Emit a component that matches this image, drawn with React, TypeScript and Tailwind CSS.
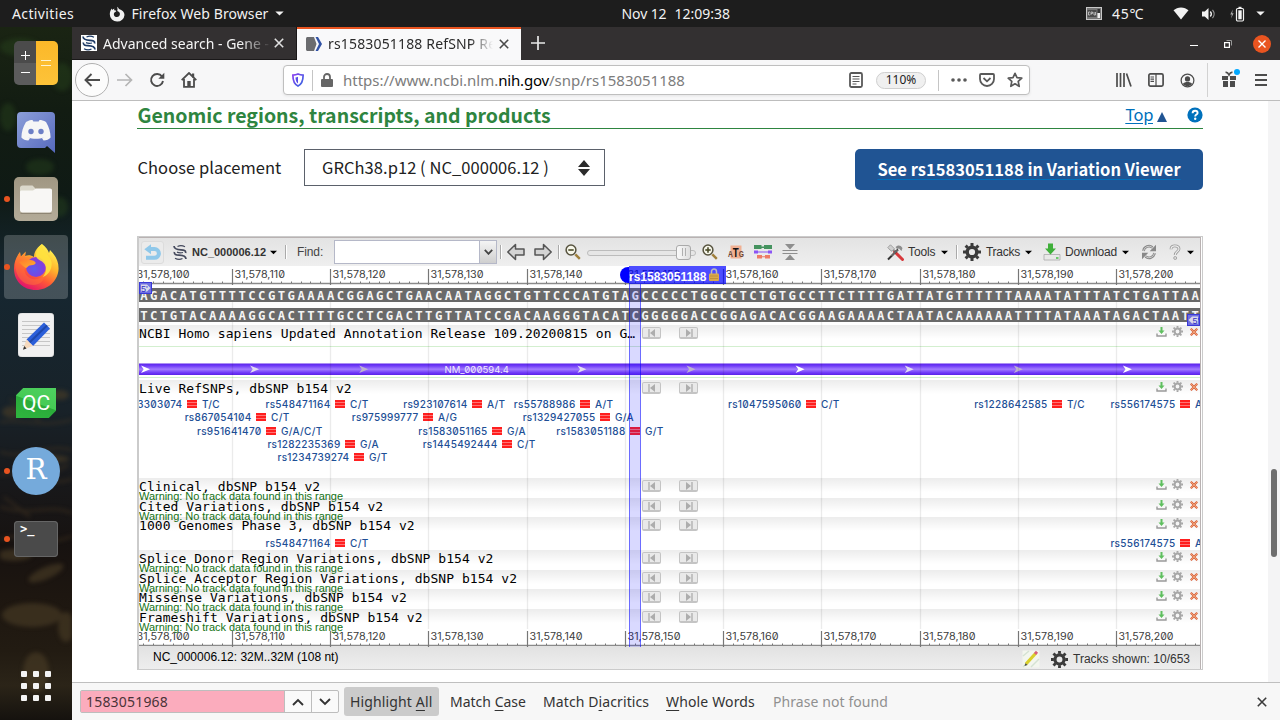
import type { ReactNode } from 'react';

const BASE = 1061 / 108;
const TOP_STRAND =
  'AGACATGTTTTCCGTGAAAACGGAGCTGAACAATAGGCTGTTCCCATGTAGCCCCCTGGCCTCTGTGCCTTCTTTTGATTATGTTTTTTAAAATATTTATCTGATTAA';
const PAIR: Record<string, string> = { A: 'T', T: 'A', G: 'C', C: 'G' };
const BOTTOM_STRAND = TOP_STRAND.split('').map((b) => PAIR[b]).join('');
const TICKS = Array.from({ length: 11 }, (_, i) => i);
const tickX = (n: number) => Math.floor((n * 10 - 0.5) * BASE);

type Snp = { id: string; base: number; alleles: string; y: number };

const LIVE_SNPS: Snp[] = [
  { id: 'rs913303074', base: 5, alleles: 'T/C', y: 24.5 },
  { id: 'rs548471164', base: 20, alleles: 'C/T', y: 24.5 },
  { id: 'rs923107614', base: 34, alleles: 'A/T', y: 24.5 },
  { id: 'rs55788986', base: 45, alleles: 'A/T', y: 24.5 },
  { id: 'rs1047595060', base: 68, alleles: 'C/T', y: 24.5 },
  { id: 'rs1228642585', base: 93, alleles: 'T/C', y: 24.5 },
  { id: 'rs556174575', base: 106, alleles: 'A/G', y: 24.5 },
  { id: 'rs867054104', base: 12, alleles: 'C/T', y: 37.5 },
  { id: 'rs975999777', base: 29, alleles: 'A/G', y: 37.5 },
  { id: 'rs1329427055', base: 47, alleles: 'G/A', y: 37.5 },
  { id: 'rs951641470', base: 13, alleles: 'G/A/C/T', y: 51.5 },
  { id: 'rs1583051165', base: 36, alleles: 'G/A', y: 51.5 },
  { id: 'rs1583051188', base: 50, alleles: 'G/T', y: 51.5 },
  { id: 'rs1282235369', base: 21, alleles: 'G/A', y: 64.5 },
  { id: 'rs1445492444', base: 37, alleles: 'C/T', y: 64.5 },
  { id: 'rs1234739274', base: 22, alleles: 'G/T', y: 77.5 },
];

const GENOMES_SNPS: Snp[] = [
  { id: 'rs548471164', base: 20, alleles: 'C/T', y: 26 },
  { id: 'rs556174575', base: 106, alleles: 'A/G', y: 26 },
];

/* ---------- desktop: top bar ---------- */

function Caret({ className = 'w-[9px]' }: { className?: string }) {
  return (
    <svg viewBox="0 0 10 6" className={`h-[5px] shrink-0 ${className}`}>
      <path d="M0 .5h10L5 5.5z" fill="currentColor" />
    </svg>
  );
}

function TopBar() {
  return (
    <header className="flex h-[27px] shrink-0 items-center bg-[#1d1d1d] text-[14px] leading-[27px] text-[#f2f2f2]">
      <span className="ml-3 w-[97px] tracking-[0.37px]">Activities</span>
      <svg viewBox="0 0 16 16" className="h-4 w-4">
        <path d="M8 .8c1 .6 1.700 1.300 2 2.200C13.300 3.900 15.500 6 15.500 9A7.200 7.200 0 0 1 8.200 15.600 7.300 7.300 0 0 1 .8 8.300C.8 6 1.500 4 2.800 2.400l.4 1.500c.7-.6 1.500-1 2.300-1.100l-.6 1.500c.9-.4 2 0 2.400 1L5.200 6.700c-.6 1.200-.4 2.800.7 3.700 1.300 1 3.200.9 4.300-.3 1-1.200 1-2.900-.1-4L8.300 5C8.700 3.500 8.500 2 8 .8z" fill="#f0f0f0" />
      </svg>
      <span className="ml-[6.500px] w-[143px] tracking-[0.084px]">Firefox Web Browser</span>
      <Caret />
      <span className="ml-[338px] tracking-[-0.1px]">Nov 12</span>
      <span className="ml-2">12:09:38</span>
      <div className="ml-auto flex items-center pr-[15px]">
        <svg viewBox="0 0 16 13" className="mr-[10px] h-[13px] w-4">
          <rect x=".5" y=".5" width="15" height="12" fill="#777" stroke="#c9c9c9" />
          <rect x="1.500" y="3" width="9" height="7" fill="#4a4a4a" />
          <path d="M4 5H2.500v3H4M5 8V5h1.500v1.500H5M8 5v3h1.500V5" stroke="#ccc" strokeWidth=".8" fill="none" />
          <rect x="11.500" y="2" width="2.500" height="4" fill="#333" />
          <rect x="11.500" y="6" width="2.500" height="5" fill="#eee" />
        </svg>
        <span className="mr-[29px] tracking-[0.68px]">45℃</span>
        <svg viewBox="0 0 16 13" className="mr-[12px] h-[13px] w-4">
          <path d="M8 12.500.5 3.300C2.500 1.400 5.100.4 8 .4s5.500 1 7.500 2.900z" fill="#f2f2f2" />
        </svg>
        <svg viewBox="0 0 16 14" className="mr-[12px] h-[14px] w-4">
          <path d="M1 4.500h2.800L7.500 1v12L3.800 9.500H1z" fill="#f2f2f2" />
          <path d="M9.300 4.500c1.200 1.400 1.200 3.600 0 5" stroke="#f2f2f2" strokeWidth="1.300" fill="none" />
          <path d="M11.500 2.800c2.100 2.400 2.100 6 0 8.400" stroke="#999" strokeWidth="1.200" fill="none" />
        </svg>
        <svg viewBox="0 0 16 16" className="mr-[11px] h-4 w-4">
          <path d="M3.800 3.500 1.300 8.600h1.600L2 12.500 4.600 7.300H3.100z" fill="#aaa" />
          <rect x="7.500" y="2.500" width="7" height="12.500" rx="1.200" fill="none" stroke="#f2f2f2" strokeWidth="1.200" />
          <rect x="9.300" y="4.300" width="3.400" height="9" fill="#f2f2f2" />
          <rect x="9.500" y=".8" width="3" height="1.500" fill="#f2f2f2" />
        </svg>
        <Caret />
      </div>
    </header>
  );
}

/* ---------- desktop: dock ---------- */

function DockSlot({ running, active, children }: { running?: boolean; active?: boolean; children: ReactNode }) {
  return (
    <div className="relative flex h-[68px] w-[72px] shrink-0 items-center justify-center">
      {active && <div className="absolute inset-x-1 inset-y-0.5 rounded bg-white/20" />}
      {running && <div className="absolute left-1 top-[31px] h-[6px] w-[6px] rounded-full bg-[#e95420]" />}
      <div className="relative flex h-12 w-12 items-center justify-center">{children}</div>
    </div>
  );
}

function Dock() {
  return (
    <nav className="relative flex w-[72px] shrink-0 flex-col overflow-hidden bg-[linear-gradient(180deg,#1a2413_0%,#121c12_12%,#0f1a15_24%,#162731_36%,#182229_55%,#18181a_66%,#171210_75%,#1d1610_82%,#221b12_90%,#2b2418_95%,#15120e_100%)] pt-[2px]">
      <svg viewBox="0 0 72 693" className="absolute inset-0 h-full w-full blur-[2px]">
        <g stroke="#4a3823" fill="none" strokeWidth="2" opacity=".6">
          <path d="M0 395c25-3 45 6 72-2M0 425c20 8 50-9 72-2M0 448c28-8 47 14 72 4M0 480c30 10 50-4 72 6M0 512c24-8 44 10 72-3M10 372l30 22M40 452l28-14M4 470l26 20" />
        </g>
        <g fill="#4c3e27" opacity=".6">
          <ellipse cx="12" cy="385" rx="10" ry="6" />
          <ellipse cx="60" cy="368" rx="9" ry="5" />
          <ellipse cx="52" cy="432" rx="17" ry="4" />
          <ellipse cx="14" cy="528" rx="18" ry="6" />
          <ellipse cx="46" cy="546" rx="19" ry="6" transform="rotate(-24 46 546)" />
          <ellipse cx="32" cy="588" rx="30" ry="12" />
          <ellipse cx="36" cy="645" rx="13" ry="20" />
          <ellipse cx="66" cy="600" rx="8" ry="15" />
        </g>
        <g fill="#2b4a1e" opacity=".4">
          <ellipse cx="20" cy="20" rx="20" ry="9" />
          <ellipse cx="62" cy="50" rx="10" ry="14" />
          <ellipse cx="8" cy="90" rx="8" ry="14" />
          <ellipse cx="40" cy="140" rx="14" ry="8" />
          <ellipse cx="60" cy="180" rx="8" ry="10" />
        </g>
      </svg>
      <DockSlot>
        <svg viewBox="0 0 44 44" className="h-11 w-11">
          <defs>
            <clipPath id="calc"><rect width="44" height="44" rx="5" /></clipPath>
            <linearGradient id="calcY" x1="0" y1="0" x2="0" y2="1"><stop stopColor="#fbb829" /><stop offset="1" stopColor="#fdc339" /></linearGradient>
          </defs>
          <g clipPath="url(#calc)">
            <rect width="22" height="22" fill="#4b4b4b" />
            <rect y="22" width="22" height="22" fill="#5c5c5c" />
            <rect x="22" width="22" height="44" fill="url(#calcY)" />
          </g>
          <path d="M7 14.500h9M11.500 10v9M7 31.500h9" stroke="#fff" strokeWidth="1" />
          <path d="M27 19.500h10M27 24.500h10" stroke="#fff3d0" strokeWidth="1" />
        </svg>
      </DockSlot>
      <DockSlot>
        <svg viewBox="0 0 38 41" className="mt-0.5 h-[41px] w-[38px]">
          <defs><linearGradient id="disc" x1="0" y1="0" x2="1" y2="1"><stop stopColor="#8c9fd9" /><stop offset="1" stopColor="#5669bd" /></linearGradient></defs>
          <path d="M4 0h30a4 4 0 0 1 4 4v37l-8-7-2 2H4a4 4 0 0 1-4-4V4a4 4 0 0 1 4-4z" fill="url(#disc)" />
          <path d="M9 10c3-1.800 5-2 6.500-2l.8 1.500h5.400L22.500 8c2 0 4 .4 6.500 2 3 5 4.500 10 4.600 15.500-1.600 1.800-4 2.900-7 3.100l-1.600-2.300 2-1.100c-4.800 2.100-11.200 2.100-16 0l2 1.100-1.600 2.300c-3-.2-5.400-1.300-7-3.100C4.500 20 6 15 9 10z" fill="#f6f6f6" />
          <circle cx="14" cy="19.500" r="2.700" fill="#6c7fc6" />
          <circle cx="24" cy="19.500" r="2.700" fill="#6c7fc6" />
        </svg>
      </DockSlot>
      <DockSlot running>
        <svg viewBox="0 0 44 44" className="h-11 w-11">
          <defs><linearGradient id="fold" x1="0" y1="0" x2="0" y2="1"><stop stopColor="#a09783" /><stop offset="1" stopColor="#b3ab98" /></linearGradient></defs>
          <rect width="44" height="44" rx="5" fill="url(#fold)" />
          <path d="M6 11c0-1.500 1-2.500 2.500-2.500h10L22 12h14c1.200 0 2 .8 2 2v4H6z" fill="#dbd8cb" />
          <path d="M6 15c0-1 .7-1.500 1.500-1.500H19l3-2h14c1.200 0 2 .8 2 2V33c0 1.500-1 2.500-2.500 2.500h-27C7 35.500 6 34.500 6 33z" fill="#f8f7f5" />
          <path d="M6.500 36.500h31" stroke="#8e8573" strokeWidth="1" />
        </svg>
      </DockSlot>
      <DockSlot running active>
        <svg viewBox="0 0 48 48" className="h-12 w-12">
          <defs>
            <linearGradient id="fx" x1=".8" y1=".1" x2=".3" y2="1"><stop stopColor="#fff04f" /><stop offset=".35" stopColor="#ffb32c" /><stop offset=".65" stopColor="#ff5a35" /><stop offset="1" stopColor="#e0106f" /></linearGradient>
            <linearGradient id="fxO" x1="0" y1="0" x2="1" y2="1"><stop stopColor="#ff7a2d" /><stop offset="1" stopColor="#ffb12e" /></linearGradient>
            <radialGradient id="fxP" cx=".4" cy=".6" r=".8"><stop stopColor="#5a5cf0" /><stop offset=".6" stopColor="#8040dc" /><stop offset="1" stopColor="#b13bc9" /></radialGradient>
          </defs>
          <path d="M30 1c4 3 6 6 7 9l1-3c6 6 9 12 8.500 20C45.500 38 36 47 24 47 11 47 2 38 2 25.500c0-5.500 1.500-10 4.500-14.500l1.500-2 .8 4.500 5-5L13 13c3-1 6-1 9 1 0-6 4-10 8-13z" fill="url(#fx)" />
          <path d="M3 21c1-5 3-9 5-12l1 5 5-5-1 5c4-1.500 7-.5 9 1.500l1 3.500c-1 1.500-4 2-6 2.500.5 2-1.500 3-3 3.500-3 1-1 8 5 10.500 6 2.200 12-1 14-5 0 6-4 11.500-12 11.500C10 42 3.500 33 3 21z" fill="#ff7438" opacity=".5" />
          <circle cx="24" cy="24" r="10" fill="url(#fxP)" />
          <path d="M7 19c3-2 10-3 14-1.500 2 .8 3 2 2.500 3-1 1.500-4 1.500-6 2-1.500.4-2 2-3.500 2.500C12 24 9 21 7 19z" fill="url(#fxO)" />
          <path d="M30 1c-4 3-6 7-6 11 0 5 6 5 8.500 9 3 5 1 10-2 13 6-2 10-8 9-15-1-7-9-9-9.500-18z" fill="#ffe23e" opacity=".9" />
        </svg>
      </DockSlot>
      <DockSlot>
        <svg viewBox="0 0 36 44" className="h-11 w-9">
          <rect width="36" height="44" rx="4" fill="#f1f1f1" stroke="#cfcfcf" strokeWidth=".6" />
          <path d="M4 8.500h28M4 12.500h28M4 16.500h28M4 20.500h28M4 24.500h28M4 28.500h28M4 32.500h28" stroke="#c6c6c6" strokeWidth="1" />
          <path d="M26 9.500 32 15.500 15 33 8.500 26.500z" fill="#2b5fd9" />
          <path d="m29 12.500-17.500 17" stroke="#1e48ac" strokeWidth="2" />
          <path d="M8.500 26.500 5 36.500 15 33z" fill="#f5d9bd" />
          <path d="M6.200 33 5 36.700l3.500-1.300z" fill="#333" />
        </svg>
      </DockSlot>
      <DockSlot>
        <div className="flex h-[30px] w-10 items-center justify-center bg-[linear-gradient(200deg,#4fd05f_0%,#45cb55_49%,#2aab3a_51%,#2fb63f_100%)] font-['Roboto','Liberation_Sans',sans-serif] text-[21px] leading-none text-white [clip-path:polygon(18%_0,100%_0,100%_76%,82%_100%,0_100%,0_24%)]">
          QC
        </div>
      </DockSlot>
      <DockSlot running>
        <div className="flex h-12 w-12 shrink-0 items-center justify-center rounded-full bg-[#75aadb] font-['DejaVu_Serif',serif] text-[28px] leading-none text-white">
          <span className="-mt-0.5">R</span>
        </div>
      </DockSlot>
      <DockSlot running>
        <div className="h-9 w-11 rounded bg-[#4a4a4a] pl-[6px] pt-[1px] font-['DejaVu_Sans_Mono',monospace] text-[12px] font-bold leading-[14px] text-white ring-1 ring-inset ring-[#666]">
          &gt;_
        </div>
      </DockSlot>
      <div className="mt-auto mb-[19px] grid grid-cols-3 gap-[6px] self-center">
        {Array.from({ length: 9 }, (_, i) => (
          <div key={i} className="relative h-[6px] w-[6px] rounded-[1px] bg-[#f4f4f4]" />
        ))}
      </div>
    </nav>
  );
}

/* ---------- browser chrome ---------- */

function CloseX({ className }: { className?: string }) {
  return (
    <svg viewBox="0 0 10 10" className={`h-[10px] w-[10px] shrink-0 ${className ?? ''}`}>
      <path d="m.8.8 8.400 8.400M9.200.8.8 9.200" stroke="currentColor" strokeWidth="1.600" />
    </svg>
  );
}

function Helix({ className, color = '#1d3a66' }: { className?: string; color?: string }) {
  return (
    <svg viewBox="0 0 16 16" className={className}>
      <path d="M2 1.500C2.200 5 6 5.200 9 5.300c3 .1 5 .7 4.600 3.200M14 14.500c-.2-3.500-4-3.700-7-3.800-3-.1-5-.7-4.600-3.200" stroke={color} strokeWidth="1.700" fill="none" />
      <path d="M5.500 2c2.500-1.200 5-1 7.500.3M3 13.700c2.500 1.300 5 1.500 7.500.3M5 7.600c2 .9 4 .9 6 .4" stroke={color} strokeWidth="1.200" fill="none" />
    </svg>
  );
}

function TabStrip() {
  return (
    <div className="flex h-[33px] shrink-0 bg-[#333031] text-[14px] leading-[33px]">
      <div className="flex w-[225px] items-center border-b border-r border-[#1a1819] pl-[9px] text-[#f4f4f4]">
        <div className="h-4 w-4 bg-white"><Helix className="h-4 w-4" /></div>
        <div className="ml-[6px] w-[168px] overflow-hidden whitespace-nowrap [mask-image:linear-gradient(90deg,#000_82%,transparent)]">Advanced search - Gene - NCBI</div>
        <CloseX className="ml-[3px] text-[#e0e0e0]" />
      </div>
      <div className="flex w-[224px] items-center border-t-2 border-[#e95420] bg-[#f9f9fa] pl-[9px] text-[#2b2b2b]">
        <svg viewBox="0 0 16 14" className="-mt-[2px] h-[14px] w-4">
          <path d="M0 1.500C0 .7.700 0 1.500 0H8l2.500 7L8 14H1.500C.7 14 0 13.300 0 12.500z" fill="#6b6c6f" />
          <path d="M9.500 0h2.500L16 7l-4 7H9.500l3.500-7z" fill="#3253a5" />
        </svg>
        <div className="-mt-[2px] ml-[6px] w-[165px] overflow-hidden whitespace-nowrap leading-[31px] tracking-[0.16px] [mask-image:linear-gradient(90deg,#000_86%,transparent)]">rs1583051188 RefSNP Report</div>
        <CloseX className="-mt-[2px] ml-[6px] text-[#4a4a4a]" />
      </div>
      <svg viewBox="0 0 14 14" className="ml-[10px] mt-[9px] h-[14px] w-[14px]">
        <path d="M7 0v14M0 7h14" stroke="#e8e8e8" strokeWidth="1.700" />
      </svg>
      <div className="flex flex-1 items-center justify-end pr-[9px]">
        <div className="mt-[4px] h-px w-2 bg-white" />
        <svg viewBox="0 0 8 8" className="ml-[26px] h-2 w-2 text-white">
          <path d="M.6 2.600h4.800v4.800H.6z" fill="none" stroke="currentColor" strokeWidth="1.200" />
          <path d="M2.500.5h5v5" fill="none" stroke="#999" strokeWidth="1" />
        </svg>
        <div className="ml-[21px] flex h-[18px] w-[18px] items-center justify-center rounded-full bg-[#e95420] text-white">
          <svg viewBox="0 0 8 8" className="h-2 w-2"><path d="m.5.5 7 7M7.500.5l-7 7" stroke="#fff" strokeWidth="1.400" /></svg>
        </div>
      </div>
    </div>
  );
}

function NavBar() {
  return (
    <div className="flex h-[41px] shrink-0 items-center border-b border-[#bdbdbd] bg-[#f7f7f8] text-[#4c4c4c]">
      <div className="ml-[3px] flex h-[34px] w-[34px] items-center justify-center rounded-full border border-[#b0b0b0] bg-[#fcfcfc]">
        <svg viewBox="0 0 16 14" className="h-[14px] w-4"><path d="M7.500 1 1.500 7l6 6M1.500 7H16" stroke="currentColor" strokeWidth="1.900" fill="none" /></svg>
      </div>
      <svg viewBox="0 0 16 14" className="ml-2 h-[14px] w-4 text-[#b5b5b5]"><path d="m8.500 1 6 6-6 6M14.500 7H0" stroke="currentColor" strokeWidth="1.700" fill="none" /></svg>
      <svg viewBox="0 0 16 16" className="ml-4 h-4 w-4"><path d="M13 4.500A6 6 0 1 0 14 9" stroke="currentColor" strokeWidth="1.900" fill="none" /><path d="M15.300.8v6h-6z" fill="currentColor" /></svg>
      <svg viewBox="0 0 16 16" className="ml-4 h-4 w-4">
        <path d="M.7 8.200 8 1l7.300 7.200M3 7v7.800h10V7" stroke="currentColor" strokeWidth="1.800" fill="none" />
        <path d="M6.300 15V9h3.400v6M11 1.500h2.200v4H11z" fill="currentColor" />
      </svg>
      <div className="ml-[86px] flex h-[30px] w-[747px] items-center rounded-[4px] border border-[#bfbfbf] bg-white text-[15px] shadow-[0_1px_3px_rgba(0,0,0,0.08)]">
        <svg viewBox="0 0 12 14" className="ml-2 h-[14px] w-3">
          <defs><linearGradient id="shield" x1="0" y1="0" x2="1" y2="1"><stop stopColor="#8a3ff0" /><stop offset="1" stopColor="#3467e0" /></linearGradient></defs>
          <path d="M6 .9c1.700.8 3.400 1.100 5.100 1.200C11.200 7.500 10.300 11 6 13.100 1.700 11 .8 7.500.9 2.100 2.600 2 4.300 1.700 6 .9z" fill="none" stroke="url(#shield)" strokeWidth="1.700" />
          <path d="M6 3.700v6.800C4.400 9.300 3.600 7.500 3.500 4.500 4.400 4.400 5.200 4.100 6 3.700z" fill="#5a4ee8" />
        </svg>
        <div className="ml-[8px] h-[21px] w-px bg-[#c5c5c5]" />
        <svg viewBox="0 0 12 14" className="ml-[8px] h-[14px] w-3"><path d="M3 7V4a3 3 0 0 1 6 0v3" stroke="#666" strokeWidth="1.800" fill="none" /><rect y="6" width="12" height="8" rx="1" fill="#666" /></svg>
        <div className="ml-[10px] flex whitespace-nowrap leading-[28px] text-[#7c7c7c]">
          <span>https://www.ncbi.nlm.</span>
          <span className="tracking-[-0.2px] text-black">nih.gov</span>
          <span>/snp/rs1583051188</span>
        </div>
        <div className="ml-auto flex items-center pr-[6px] text-[#595959]">
          <svg viewBox="0 0 14 16" className="h-4 w-[14px]"><rect x="1" y="1" width="12" height="14" rx="1.500" fill="none" stroke="currentColor" strokeWidth="1.800" /><path d="M3.500 4.500h7M3.500 7h7M3.500 9.500h7M3.500 12h4" stroke="currentColor" strokeWidth="1" /></svg>
          <div className="ml-[13px] flex h-[17px] w-[50px] items-center justify-center rounded-full border border-[#cfcfcf] bg-[#f0f0f0] text-[12px] text-[#1c1c1c]">110%</div>
          <div className="ml-3 h-[21px] w-px bg-[#c5c5c5]" />
          <svg viewBox="0 0 16 4" className="ml-3 h-1 w-4"><circle cx="2" cy="2" r="1.800" fill="currentColor" /><circle cx="8" cy="2" r="1.800" fill="currentColor" /><circle cx="14" cy="2" r="1.800" fill="currentColor" /></svg>
          <svg viewBox="0 0 16 14" className="ml-3 h-[14px] w-4"><path d="M1 2c0-.6.400-1 1-1h12c.6 0 1 .4 1 1v4a7 7 0 0 1-14 0z" fill="none" stroke="currentColor" strokeWidth="1.800" /><path d="m4.500 5 3.500 3.300L11.500 5" fill="none" stroke="currentColor" strokeWidth="1.800" /></svg>
          <svg viewBox="0 0 16 16" className="ml-3 h-4 w-4"><path d="m8 1.300 2 4.400 4.800.5-3.600 3.200 1 4.900L8 11.800l-4.200 2.500 1-4.900L1.200 6.200 6 5.700z" fill="none" stroke="currentColor" strokeWidth="1.700" strokeLinejoin="round" /></svg>
        </div>
      </div>
      <div className="ml-auto flex items-center pr-[13px] text-[#4c4c4c]">
        <svg viewBox="0 0 16 14" className="h-[14px] w-4"><path d="M1 0v14M4.500 0v14M8 0v14M10.500.5 15 13.500" stroke="currentColor" strokeWidth="1.700" /></svg>
        <svg viewBox="0 0 16 14" className="ml-[16px] h-[14px] w-4"><rect x=".9" y=".9" width="14.200" height="12.200" rx="1.500" fill="none" stroke="currentColor" strokeWidth="1.700" /><path d="M8 1v12M2.500 4H6M2.500 6.200H6M2.500 8.400H6" stroke="currentColor" strokeWidth="1.200" /></svg>
        <svg viewBox="0 0 16 16" className="ml-[16px] h-[15px] w-[15px]"><circle cx="8" cy="8" r="6.800" fill="none" stroke="currentColor" strokeWidth="1.300" /><circle cx="8" cy="6.300" r="2.800" fill="currentColor" /><path d="M3 11.800c1-1.800 3-2.200 5-2.200s4 .4 5 2.200c-1.200 1.300-3 2.200-5 2.200s-3.800-.9-5-2.200z" fill="currentColor" /></svg>
        <div className="ml-[12px] h-[34px] w-px bg-[#d2d2d2]" />
        <svg viewBox="0 0 18 18" className="-mt-1 ml-[14px] h-[18px] w-[18px]">
          <path d="M0 7h6v4H0zM8 7h6v4H8zM1 12h5v6H1zM8 12h5v6H8z" fill="currentColor" />
          <path d="M3.500 3.500c1.500-.5 2.800 1 3.500 2.500.7-1.500 2-3 3.500-2.500" stroke="currentColor" strokeWidth="1.700" fill="none" />
          <circle cx="15" cy="3" r="3" fill="#00a8ff" />
        </svg>
        <svg viewBox="0 0 12 12" className="ml-[15px] h-3 w-3"><path d="M0 1h12M0 6h12M0 11h12" stroke="currentColor" strokeWidth="1.800" /></svg>
      </div>
    </div>
  );
}

function FindBar() {
  return (
    <div className="flex h-[38px] shrink-0 items-center border-t border-[#bfbfbf] bg-[#f7f7f7] pl-2 text-[14px] text-[#333]">
      <div className="flex h-[23px] w-[259px] rounded-[2px] border border-[#bdbdbd] bg-[#fafafa]">
        <div className="w-[203px] bg-[#fbacbd] pl-[5px] leading-[22px] tracking-[0.19px] text-[#4a3338]">1583051968</div>
        <div className="flex w-[27px] items-center justify-center border-l border-[#bdbdbd]">
          <svg viewBox="0 0 12 8" className="h-2 w-3"><path d="m1 7 5-5 5 5" stroke="#333" strokeWidth="1.900" fill="none" /></svg>
        </div>
        <div className="flex w-[27px] items-center justify-center border-l border-[#bdbdbd]">
          <svg viewBox="0 0 12 8" className="h-2 w-3"><path d="m1 1 5 5 5-5" stroke="#333" strokeWidth="1.900" fill="none" /></svg>
        </div>
      </div>
      <div className="ml-[5px] h-[29px] w-[95px] whitespace-nowrap rounded-[3px] bg-[#cbcbcb] pl-[6px] leading-[29px] tracking-[0.14px]">
        Highlight <span className="underline underline-offset-[3px]">A</span>ll
      </div>
      <span className="ml-[11px] w-[93px]">Match <span className="underline underline-offset-[3px]">C</span>ase</span>
      <span className="w-[123px] tracking-[0.1px]">Match D<span className="underline underline-offset-[3px]">i</span>acritics</span>
      <span className="w-[107px] tracking-[0.15px]"><span className="underline underline-offset-[3px]">W</span>hole Words</span>
      <span className="tracking-[0.08px] text-[#909090]">Phrase not found</span>
      <CloseX className="ml-auto mr-[13px] text-[#3a3a3a]" />
    </div>
  );
}

/* ---------- sequence viewer ---------- */

function Gear({ className, color = '#3b3b3b' }: { className?: string; color?: string }) {
  return (
    <svg viewBox="0 0 18 18" className={className}>
      <circle cx="9" cy="9" r="4.800" fill="none" stroke={color} strokeWidth="3.400" />
      <g stroke={color} strokeWidth="3">
        <path d="M9 0v3M9 15v3M0 9h3M15 9h3M2.600 2.600l2.200 2.200M13.200 13.200l2.200 2.200M2.600 15.400l2.200-2.200M13.200 4.800l2.200-2.200" />
      </g>
    </svg>
  );
}

function Magnifier({ plus, className }: { plus?: boolean; className?: string }) {
  return (
    <svg viewBox="0 0 16 16" className={`h-4 w-4 ${className ?? ''}`}>
      <path d="m10.300 10.300 4.500 4.500" stroke="#a0803c" strokeWidth="2.400" />
      <circle cx="6" cy="6" r="4.900" fill="#f6f6ea" stroke="#57533f" strokeWidth="1.500" />
      <path d="M3.300 6h5.400" stroke="#4b4b2a" strokeWidth="1.600" />
      {plus && <path d="M6 3.300v5.400" stroke="#4b4b2a" strokeWidth="1.600" />}
    </svg>
  );
}

function Separator({ className }: { className?: string }) {
  return <div className={`h-[14px] w-[2px] border-l border-r border-l-[#aaa] border-r-white ${className ?? ''}`} />;
}

function BlockArrow({ right, className }: { right?: boolean; className?: string }) {
  return (
    <svg viewBox="0 0 18 18" className={`h-[18px] w-[18px] ${right ? '-scale-x-100' : ''} ${className ?? ''}`}>
      <path d="M.8 9 8.500 1.500V6H17v6H8.500v4.500z" fill="#d4d4d4" stroke="#555" strokeWidth="1.500" strokeLinejoin="round" />
    </svg>
  );
}

function Toolbar() {
  return (
    <div className="flex h-[28px] shrink-0 items-center bg-[linear-gradient(180deg,#e3e3e3,#efefef)] text-[12px] text-[#333] [&>*]:shrink-0">
      <div className="ml-[2px] flex h-[23px] w-[23px] items-center justify-center rounded-[3px] border border-[#dcdcdc] bg-[#ebebeb]">
        <svg viewBox="0 0 18 17" className="h-[17px] w-[18px]">
          <path d="M6 5h4.500a4.200 4.200 0 0 1 0 8.800H2" stroke="#8fc8ea" strokeWidth="4" fill="none" />
          <path d="M.3 5.300 7 .3v10z" fill="#8fc8ea" />
        </svg>
      </div>
      <Helix className="ml-[8px] h-[17px] w-[16px]" color="#44495c" />
      <span className="ml-[4px] w-[78px] text-[11px] font-bold">NC_000006.12</span>
      <Caret className="w-[7px] text-black" />
      <Separator className="ml-[8px]" />
      <span className="ml-[10px] w-[37px] tracking-[-0.1px] text-[#444]">Find:</span>
      <div className="flex h-[24px] w-[163px] border border-[#b5b8c8] bg-white">
        <div className="ml-auto flex w-[17px] items-center justify-center border-l border-[#b5b8c8] bg-[linear-gradient(180deg,#f4f4f4,#cfcfcf)]">
          <svg viewBox="0 0 9 6" className="h-[6px] w-[9px]"><path d="m.8.8 3.700 4 3.700-4" stroke="#444" strokeWidth="1.800" fill="none" /></svg>
        </div>
      </div>
      <Separator className="ml-[3px]" />
      <BlockArrow className="ml-[5px]" />
      <BlockArrow right className="ml-[9px]" />
      <Separator className="ml-[6px]" />
      <Magnifier className="ml-[5px]" />
      <div className="relative ml-[6px] h-[17px] w-[109px]">
        <div className="absolute inset-x-0 top-[6px] h-[6px] rounded-full border border-[#bcbcbc] bg-[#e6e6e6]" />
        <div className="absolute left-[89px] top-[1px] flex h-[15px] w-[15px] items-center justify-center gap-[2px] rounded-[3px] border border-[#aaa] bg-[linear-gradient(90deg,#fafafa,#dedede)]">
          <div className="h-2 w-px bg-[#b0b0b0]" />
          <div className="h-2 w-px bg-[#b0b0b0]" />
        </div>
      </div>
      <Magnifier plus className="ml-[6px]" />
      <svg viewBox="0 0 16 16" className="ml-[10px] h-4 w-4 overflow-visible">
        <path d="M2.500 1.500h11v13h-11z" fill="#f0b093" />
        <text x="8" y="12.500" textAnchor="middle" textLength="16" lengthAdjust="spacingAndGlyphs" fontFamily="Liberation Sans" fontWeight="700" fontSize="9" fill="#6b4433">A<tspan fontSize="13" fill="#111">T</tspan>G</text>
      </svg>
      <svg viewBox="0 0 18 14" className="ml-[10px] h-[14px] w-[18px]">
        <path d="M0 0h7.500v4H0zM10 0h8v4h-8zM7 1.500h4v1.500H7z" fill="#45935f" />
        <path d="M0 5.500h4v3H0zM14 5.500h4v3h-4zM4 6.500h10v1H4z" fill="#8b55f5" />
        <path d="M3 10h5v3.500H3zM11 10h5v3.500h-5zM8 11.200h3v1H8z" fill="#ee7b66" />
      </svg>
      <svg viewBox="0 0 16 16" className="ml-[10px] h-4 w-4">
        <path d="M3 0h10L8 5.500zM3 16h10L8 10.500z" fill="#8e8e8e" />
        <path d="M.5 6.500h15M.5 9.500h15" stroke="#8e8e8e" strokeWidth="1" />
      </svg>
      <div className="ml-auto flex items-center [&>*]:shrink-0">
        <svg viewBox="0 0 17 17" className="h-[17px] w-[17px]">
          <path d="m15.500 15.500-8-8" stroke="#d8393c" strokeWidth="3" strokeLinecap="round" />
          <path d="m9 8.500-3-3" stroke="#888" strokeWidth="2" />
          <path d="m1 15.500 10-10" stroke="#333" strokeWidth="2" />
          <path d="m4.500 12 6-6" stroke="#999" strokeWidth="1" />
          <path d="M8.500 3c2-2 5-2.500 7 1l-1 3-2.500-2.500-2 .5z" fill="#8d8d8d" />
          <path d="M.8 3.500 3.500.8l4 4L5 7.300 3 6z" fill="#cfcfcf" stroke="#888" strokeWidth=".7" />
        </svg>
        <span className="ml-[4px] w-[33px] tracking-[-0.1px]">Tools</span>
        <Caret className="w-[7px] text-black" />
        <Separator className="ml-[8px]" />
        <Gear className="ml-[5px] h-[18px] w-[18px]" />
        <span className="ml-[5px] w-[39px] tracking-[-0.26px]">Tracks</span>
        <Caret className="w-[7px] text-black" />
        <svg viewBox="0 0 18 18" className="ml-[11px] h-[18px] w-[18px]">
          <path d="M1 11.500h16V17H1z" fill="#e8e8e8" stroke="#aaa" strokeWidth=".8" />
          <path d="M5 .5h5v5h3L7.500 11.500 2 5.500h3z" fill="#3faf3a" />
          <path d="M13 15h2.500" stroke="#45c145" strokeWidth="1.500" />
        </svg>
        <span className="ml-[4px] w-[57px] tracking-[-0.17px]">Download</span>
        <Caret className="w-[7px] text-black" />
        <svg viewBox="0 0 16 16" className="ml-[12px] h-4 w-4">
          <path d="M2.500 7A5.500 5.500 0 0 1 11.500 3.500M13.500 9a5.500 5.500 0 0 1-9 3.500" stroke="#888" strokeWidth="2.600" fill="none" />
          <path d="M15 .8v6.400H8.700zM1 15.200V8.800h6.300z" fill="#888" />
          <path d="M2.500 7A5.500 5.500 0 0 1 11.500 3.500M13.500 9a5.500 5.500 0 0 1-9 3.500" stroke="#ccc" strokeWidth="1" fill="none" />
        </svg>
        <svg viewBox="0 0 12 16" className="ml-[12px] h-4 w-3">
          <path d="M2 5.200C2 3 3.500 1.800 5.800 1.800S10 3 10 5c0 2.600-3.800 2.600-3.800 6" stroke="#999" strokeWidth="2.800" fill="none" />
          <path d="M2 5.200C2 3 3.500 1.800 5.800 1.800S10 3 10 5c0 2.600-3.800 2.600-3.800 6" stroke="#eee" strokeWidth="1.200" fill="none" />
          <circle cx="6.200" cy="14" r="1.500" fill="#ddd" stroke="#999" strokeWidth=".8" />
        </svg>
        <Caret className="ml-[6px] mr-[6px] w-[7px] text-black" />
      </div>
    </div>
  );
}

function Ruler({ className }: { className: string }) {
  return (
    <svg viewBox="0 0 1061 20" className={`h-[20px] w-full shrink-0 ${className}`}>
      <path d="M0 17.500h1061" stroke="#8a8a8a" strokeWidth="1.400" />
      {Array.from({ length: 108 }, (_, i) => (
        <path key={i} d={`M${Math.floor((i + 0.5) * BASE) + 0.5} 15.500v1.500`} stroke="#777" strokeWidth="1" />
      ))}
      {TICKS.map((n) => (
        <g key={n}>
          {n > 0 && <path d={`M${tickX(n) + 0.5} 3v16`} stroke="#777" strokeWidth="1.200" />}
          <text
            x={n === 0 ? -2.5 : tickX(n) + 2.5}
            y="12"
            textLength={n === 1 ? 50.5 : n === 10 ? 55 : 53}
            lengthAdjust="spacingAndGlyphs"
            fontSize="9.800"
            fill="#3c3c3c"
            className="font-['Inter',sans-serif] [font-feature-settings:'zero']"
          >
            {`31,578,${100 + n * 10}`}
          </text>
        </g>
      ))}
    </svg>
  );
}

function Strand({ bases }: { bases: string }) {
  return (
    <svg viewBox="0 0 1061 14" className="h-[14px] w-full shrink-0 bg-[#6a6a6a]">
      <text
        x={bases.split('').map((_, i) => ((i + 0.5) * BASE).toFixed(1)).join(' ')}
        y="11.500"
        textAnchor="middle"
        fontSize="12.300"
        fontWeight="700"
        fill="#f5f5f5"
        className="font-['DejaVu_Sans_Mono',monospace]"
      >
        {bases}
      </text>
    </svg>
  );
}

function SnpPlot({ snps, height }: { snps: Snp[]; height: string }) {
  return (
    <svg className={`absolute inset-x-0 top-0 w-full font-['Inter',sans-serif] [font-feature-settings:'zero'] ${height}`}>
      {snps.map((s) => {
        const x = Math.round(s.base * BASE - 0.7);
        const top = Math.round(s.y - 4.5);
        return (
          <g key={s.id} fontSize="10" fontWeight="500" letterSpacing=".3" fill="#1d4f96">
            <text x={x - 4.5} y={s.y + 3.5} textAnchor="end">{s.id}</text>
            <rect x={x} y={top} width="10" height="8" fill="#ff1f1f" />
            <path d={`M${x} ${top + 2.5}h10M${x} ${top + 5.5}h10`} stroke="#ff7474" strokeWidth="1" />
            <text x={x + 15} y={s.y + 3.5}>{s.alleles}</text>
          </g>
        );
      })}
    </svg>
  );
}

function StepButton({ next }: { next?: boolean }) {
  return (
    <div className="flex h-[12px] w-[19px] items-center justify-center rounded-[2px] border border-b-2 border-[#c4c4c4] bg-[#e9e9e9]">
      <svg viewBox="0 0 8 8" className={`h-2 w-2 ${next ? '' : '-scale-x-100'}`}>
        <path d="M1 0v8l5-4z" fill="#adadad" />
        <path d="M7 0v8" stroke="#adadad" strokeWidth="1.300" />
      </svg>
    </div>
  );
}

function Track({ title, height, warning, children }: { title: string; height: string; warning?: boolean; children?: ReactNode }) {
  return (
    <section className={`relative shrink-0 bg-[linear-gradient(180deg,rgba(0,0,0,0.075)_0px,rgba(0,0,0,0)_14px)] ${height}`}>
      {children}
      <div className="relative flex h-[16px] items-start">
        <h3 className="w-[503px] whitespace-nowrap font-['DejaVu_Sans_Mono',monospace] text-[13px] leading-[17px] tracking-[0.05px] text-black">{title}</h3>
        <div className="mt-[2px] flex gap-[18px]">
          <StepButton />
          <StepButton next />
        </div>
        <div className="ml-auto mr-[2px] mt-px flex items-center">
          <svg viewBox="0 0 11 10" className="h-[10px] w-[11px]">
            <path d="M1 6.500V9h9V6.500" stroke="#999" strokeWidth="1.400" fill="none" />
            <path d="M4.500 0h2v3.500H8.500L5.500 7 2.500 3.500h2z" fill="#5fbf5f" />
          </svg>
          <Gear className="ml-[5px] h-[11px] w-[11px]" color="#a6a6a6" />
          <svg viewBox="0 0 8 8" className="ml-[7px] h-2 w-2">
            <path d="m.8.8 6.400 6.400M7.200.8.8 7.200" stroke="#d9603b" strokeWidth="2.200" />
            <path d="m.8.8 6.400 6.400M7.200.8.8 7.200" stroke="#f3b083" strokeWidth=".8" />
          </svg>
        </div>
      </div>
      {warning && (
        <p className="relative -mt-[4px] h-[13px] whitespace-nowrap font-['Liberation_Sans',sans-serif] text-[11px] leading-[13px] tracking-[-0.04px] text-[#157315]">
          Warning: No track data found in this range
        </p>
      )}
    </section>
  );
}

function GenePlot() {
  return (
    <svg viewBox="0 0 1061 55" className="absolute inset-x-0 top-0 h-[55px] w-full">
      <defs>
        <linearGradient id="gene" x1="0" y1="0" x2="0" y2="1">
          <stop stopColor="#5a22e8" />
          <stop offset=".2" stopColor="#6f3bf8" />
          <stop offset=".5" stopColor="#a27cff" />
          <stop offset=".8" stopColor="#6f3bf8" />
          <stop offset="1" stopColor="#5a22e8" />
        </linearGradient>
      </defs>
      <path d="M0 21.500h1061M0 52.500h1061" stroke="#d3efcf" strokeWidth="1" />
      <rect y="38.500" width="1061" height="11.500" fill="url(#gene)" />
      {Array.from({ length: 10 }, (_, i) => i).filter((i) => i !== 3).map((i) => (
        <path key={i} d={`M${2 + i * 109.1} 40.500l9 3.700-9 3.700 2.600-3.700z`} fill={['#fff', '#e2dcf2', '#bdb3cf'][i % 3]} />
      ))}
      <text x="305.500" y="47.800" textLength="64.500" fontSize="9.500" fill="#efe8ff" className="font-['Inter',sans-serif] [font-feature-settings:'zero']">
        NM_000594.4
      </text>
    </svg>
  );
}

function StrandFlag({ end, className }: { end?: boolean; className: string }) {
  return (
    <svg viewBox="0 0 13 12" className={`absolute h-3 w-[13px] ${className}`}>
      <rect x=".5" y=".5" width="12" height="11" fill="#6f6fe0" stroke="#3a3ad8" />
      <path d={end ? 'M11 2.500v7H5L1.500 6 5 2.500z' : 'M2 2.500v7h6L11.500 6 8 2.500z'} fill="#d9d9ea" />
      <text x={end ? 5.5 : 2} y="9.500" fontSize="9" fill="#3030c8" fontFamily="Liberation Sans">5'</text>
    </svg>
  );
}

function SequenceViewer() {
  return (
    <div className="h-[434px] w-[1066px] border-y border-l-2 border-r border-[#cbcbcb] font-['Liberation_Sans',sans-serif]">
      <div className="relative mr-px flex h-[432px] flex-col overflow-hidden border-r border-t border-[#b9b2b2] bg-white">
        <Toolbar />
        <div className="relative flex h-[381px] flex-col overflow-hidden">
          <Ruler className="" />
          <div className="relative mt-[2px] flex h-[37px] shrink-0 flex-col gap-[6px]">
            <Strand bases={TOP_STRAND} />
            <Strand bases={BOTTOM_STRAND} />
          </div>
          <Track title="NCBI Homo sapiens Updated Annotation Release 109.20200815 on G…" height="h-[55px]"><GenePlot /></Track>
          <Track title="Live RefSNPs, dbSNP b154 v2" height="h-[98px]"><SnpPlot snps={LIVE_SNPS} height="h-[98px]" /></Track>
          <Track title="Clinical, dbSNP b154 v2" height="h-[20px]" warning />
          <Track title="Cited Variations, dbSNP b154 v2" height="h-[19px]" warning />
          <Track title="1000 Genomes Phase 3, dbSNP b154 v2" height="h-[33px]"><SnpPlot snps={GENOMES_SNPS} height="h-[33px]" /></Track>
          <Track title="Splice Donor Region Variations, dbSNP b154 v2" height="h-[20px]" warning />
          <Track title="Splice Acceptor Region Variations, dbSNP b154 v2" height="h-[19px]" warning />
          <Track title="Missense Variations, dbSNP b154 v2" height="h-[20px]" warning />
          <Track title="Frameshift Variations, dbSNP b154 v2" height="h-[20px]" warning />
          <Ruler className="-mt-[1px]" />

          <svg viewBox="0 0 1061 363" className="pointer-events-none absolute left-0 top-0 h-[363px] w-full">
            {TICKS.slice(1).map((n) => (
              <path key={n} d={`M${tickX(n) + 0.5} 36v6M${tickX(n) + 0.5} 56v307`} stroke="#000" strokeOpacity=".08" strokeWidth="1.300" />
            ))}
          </svg>
          <StrandFlag className="left-0 top-[16px]" />
          <StrandFlag end className="right-0 top-[48px]" />
          <div className="absolute bottom-0 left-[490px] top-[18px] w-[12px] border-x border-[#0000ff]/50 bg-[#0000ff]/15" />
          <div className="absolute left-[481px] top-px h-4 w-[9px] rounded-l-full bg-[#0000ff]" />
          <div className="absolute left-[490px] top-0 flex h-[18px] w-[97px] items-center bg-[#0000ff]/70 pt-[3px] text-[12px] font-bold leading-none text-white">
            rs1583051188
            <svg viewBox="0 0 10 13" className="-mt-1 ml-[3px] h-[13px] w-[10px]">
              <path d="M2.500 6V3.500a2.500 2.500 0 0 1 5 0V6" stroke="#bbb" strokeWidth="1.500" fill="none" />
              <rect y="5.500" width="10" height="7.500" rx="1" fill="#d9a94c" />
              <path d="M1 8h8M1 10.500h8" stroke="#b98a35" strokeWidth=".8" />
            </svg>
          </div>
        </div>
        <div className="flex h-[22px] shrink-0 items-center bg-[linear-gradient(180deg,#e2e2e2,#eeeeee)] pl-[14px] pr-[10px] text-[12px] text-[#222]">
          <span className="mb-[2px] text-black">NC_000006.12: 32M..32M (108 nt)</span>
          <svg viewBox="0 0 18 18" className="ml-auto mt-[2px] h-[18px] w-[18px]">
            <rect x=".5" y=".5" width="17" height="17" fill="#f3f6ee" />
            <path d="M1 17 9 9M9 17l8-8M1 6l6-5" stroke="#d5e2d3" strokeWidth="1.500" />
            <path d="m4 14 9.500-10.500" stroke="#d9cf2b" strokeWidth="3.200" />
            <path d="m13 4 2-2.200" stroke="#d9607a" strokeWidth="3" />
            <path d="m2.500 16 1-2.800L5.500 15z" fill="#444" />
          </svg>
          <Gear className="ml-[11px] mt-[2px] h-[17px] w-[17px]" />
          <span className="ml-[5px] mt-[2px] text-[#333]">Tracks shown: 10/653</span>
        </div>
      </div>
    </div>
  );
}

/* ---------- page ---------- */

function Page() {
  return (
    <div className="flex min-h-0 flex-1 bg-white font-['Noto_Sans_CJK_SC','Noto_Sans',sans-serif] text-[16.500px] text-[#212121]">
      <main className="flex-1 overflow-hidden pl-[65px]">
        <div className="flex h-[28px] w-[1066px] items-center border-b border-[#2e8540]">
          <h2 className="ml-[0.500px] whitespace-nowrap text-[19.500px] font-bold leading-[26px] text-[#2e8540]">Genomic regions, transcripts, and products</h2>
          <a className="ml-auto -mt-[2px] leading-[26px] tracking-[-0.4px] text-[#0071bc] underline underline-offset-2">Top</a>
          <svg viewBox="0 0 10 10" className="ml-1 mt-1 h-[10px] w-[10px]"><path d="m5 0 5 10H0z" fill="#205493" /></svg>
          <svg viewBox="0 0 16 16" className="ml-[20px] h-4 w-4">
            <circle cx="8" cy="8" r="7.600" fill="#0071bc" />
            <path d="M5.600 6.200c0-1.600 1-2.500 2.500-2.500s2.500.9 2.500 2.200c0 1.700-2.400 1.700-2.400 3.600" stroke="#fff" strokeWidth="1.900" fill="none" />
            <circle cx="8.200" cy="11.800" r="1.200" fill="#fff" />
          </svg>
        </div>
        <div className="mt-5 flex h-[41px] w-[1066px] items-start">
          <span className="w-[167px] pl-[0.500px] leading-[37px] tracking-[0.04px] text-[#212121]">Choose placement</span>
          <div className="flex h-[37px] w-[301px] items-center border border-[#5b616b] pl-[17px]">
            <span className="whitespace-nowrap leading-[35px] tracking-[0.05px]">GRCh38.p12 ( NC_000006.12 )</span>
            <svg viewBox="0 0 12 16" className="ml-auto mr-[14px] h-4 w-3"><path d="M0 7 6 0l6 7zM0 9l6 7 6-7z" fill="#2b2b2b" /></svg>
          </div>
          <a className="ml-auto h-[41px] w-[348px] rounded-[5px] bg-[#205493] text-center font-bold leading-[40px] tracking-[0.03px] text-white underline decoration-[#0071bc] decoration-1 underline-offset-[3px]">
            See rs1583051188 in Variation Viewer
          </a>
        </div>
        <div className="mt-[46px]"><SequenceViewer /></div>
      </main>
      <div className="w-3 bg-[#f4f4f5] px-[3px] pt-[368px]">
        <div className="h-[88px] rounded-full bg-[#6e6e6e]" />
      </div>
    </div>
  );
}

export default function App() {
  return (
    <div className="flex h-[720px] w-[1280px] flex-col overflow-hidden font-['Noto_Sans',sans-serif]">
      <TopBar />
      <div className="flex min-h-0 flex-1">
        <Dock />
        <div className="flex min-w-0 flex-1 flex-col">
          <TabStrip />
          <NavBar />
          <Page />
          <FindBar />
        </div>
      </div>
    </div>
  );
}
